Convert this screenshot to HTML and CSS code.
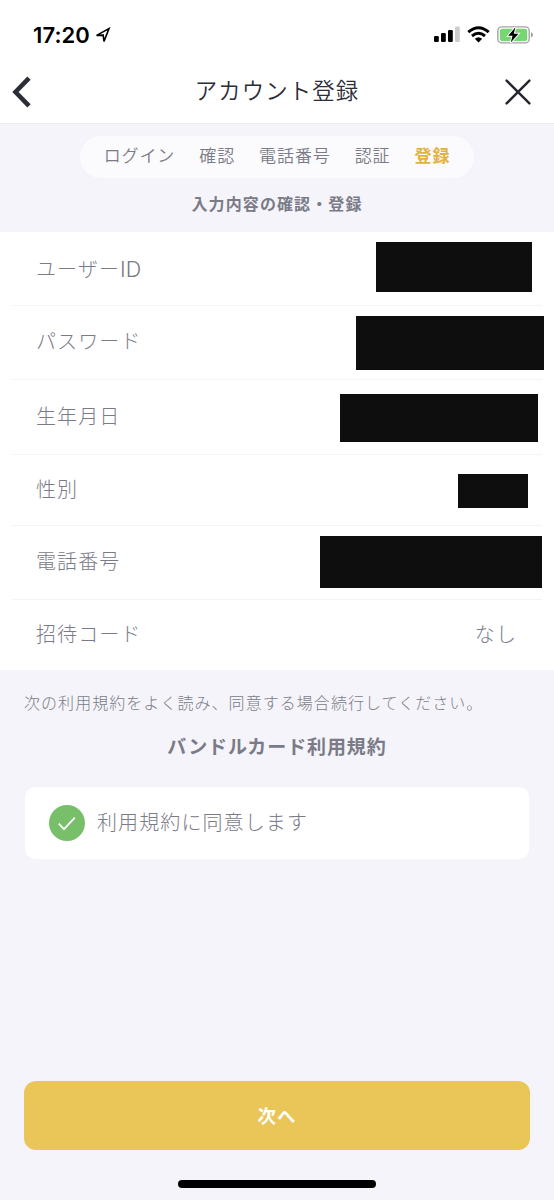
FILE: index.html
```html
<!DOCTYPE html>
<html lang="ja">
<head>
<meta charset="utf-8">
<title>アカウント登録</title>
<link rel="stylesheet" href="styles.css">
</head>
<body>
<div class="screen">
  <div class="statusbar">
    <span class="clock">17:20</span>
    <svg class="location" width="16" height="16" viewBox="0 0 16 16"><path d="M1.6 8.4 14 1.6 9 14.4 8.2 8.4Z" fill="none" stroke="#000" stroke-width="1.6"/><path d="M1 8.4 9 7.2 8.2 9.2Z"/></svg>
    <svg class="signal" width="26" height="16" viewBox="0 0 26 16"><rect y="10" width="4.8" height="6" rx="1.2"/><rect x="7" y="7" width="4.8" height="9" rx="1.2"/><rect x="14" y="4" width="4.8" height="12" rx="1.2"/><rect x="21" y="0.5" width="4.8" height="15.5" rx="1.2" fill="#ccc"/></svg>
    <svg class="wifi" width="23" height="17" viewBox="0 0 23 17"><g fill="none" stroke="#000" stroke-width="3"><path d="M1.3 6.2Q11.5-2.6 21.7 6.2"/><path d="M5 10Q11.5 4.5 18 10"/></g><path d="M7.8 12.8Q11.5 9.8 15.2 12.8L11.5 16.5Z"/></svg>
    <svg class="battery" width="36" height="18" viewBox="0 0 36 18"><rect x=".8" y=".9" width="31.4" height="16" rx="4" fill="#fff" stroke="#a3a3a3" stroke-width="1.4"/><rect x="2.8" y="2.8" width="27.4" height="12.2" rx="2.2" fill="#76d672"/><path d="M34 6.2Q36 7 36 8.8T34 11.6Z" fill="#999"/><path d="M18.4 1.2 11.2 9.8h4.3L13.8 16.6 21.4 7.7h-4.6Z" stroke="#fff" stroke-width="2" paint-order="stroke"/></svg>
  </div>
  <header class="navbar">
    <svg class="back" width="20" height="32" viewBox="0 0 20 32"><path d="M17 2.2 3.5 16 17 29.8" fill="none" stroke="#2b2d37" stroke-width="4.6"/></svg>
    <h1 class="title">アカウント登録</h1>
    <svg class="close" width="26" height="26" viewBox="0 0 26 26"><path d="M1.6 1.6 24.4 24.4M24.4 1.6 1.6 24.4" stroke="#24262f" stroke-width="2.4" stroke-linecap="round"/></svg>
  </header>
  <div class="intro">
    <nav class="steps"><span>ログイン</span><span>確認</span><span>電話番号</span><span>認証</span><span class="current">登録</span></nav>
    <h2 class="subtitle">入力内容の確認・登録</h2>
  </div>
  <div class="list">
    <div class="row user"><span class="label">ユーザー<span class="latin">ID</span></span><span class="mask"></span></div>
    <div class="row password"><span class="label">パスワード</span><span class="mask"></span></div>
    <div class="row birthday"><span class="label">生年月日</span><span class="mask"></span></div>
    <div class="row gender"><span class="label">性別</span><span class="mask"></span></div>
    <div class="row phone"><span class="label">電話番号</span><span class="mask"></span></div>
    <div class="row invite"><span class="label">招待コード</span><span class="value">なし</span></div>
  </div>
  <p class="note">次の利用規約をよく読み、同意する場合続行してください。</p>
  <a class="terms">バンドルカード利用規約</a>
  <div class="agree">
    <svg width="36" height="36" viewBox="0 0 36 36"><circle cx="18" cy="18" r="18" fill="#77c069"/><path d="M9.8 18.7 15 24.2 25.8 12.7" fill="none" stroke="#fff" stroke-width="1.8"/></svg>
    <span>利用規約に同意します</span>
  </div>
  <button class="next">次へ</button>
  <div class="home"></div>
</div>
</body>
</html>
```

FILE: styles.css
```css
* { box-sizing: border-box; }
body { margin: 0; font-family: "Noto Sans CJK JP", sans-serif; font-weight: 300; color: #7a7b87; }
.screen { width: 554px; height: 1200px; background: #f5f4fa; display: flex; flex-direction: column; }
svg { display: block; flex: none; }
.statusbar { height: 62px; background: #fff; display: flex; align-items: flex-start; padding: 26px 21px 0 33px; }
.clock { font: 600 22px/18px Inter, sans-serif; color: #000; width: 62px; letter-spacing: 0.1px; }
.location { margin-top: 1px; }
.signal { margin-left: auto; }
.wifi { margin-left: 7px; }
.battery { margin-left: 7px; }
.navbar { height: 62px; background: #fff; border-bottom: 1px solid #ebebf4; display: flex; align-items: flex-start; justify-content: space-between; padding: 14px 23px 0 12px; }
.title { margin: -1px 0 0; font-size: 22.4px; line-height: 28px; font-weight: 350; letter-spacing: 1.1px; color: #2b2d37; padding-left: 17px; }
.close { margin-top: 3px; }
.intro { height: 108px; padding-top: 12px; display: flex; flex-direction: column; align-items: center; }
.steps { height: 42px; border-radius: 21px; background: #fbfbfd; padding: 0 24px; display: flex; gap: 24px; font-size: 17px; line-height: 38px; letter-spacing: .9px; white-space: nowrap; font-weight: 350; }
.current { color: #e2b23d; font-weight: 700; }
.subtitle { margin: 12px 0 0; font-size: 16px; line-height: 26px; letter-spacing: 1.1px; font-weight: 700; }
.list { background: #fff; height: 438px; padding: 0 12px; }
.row { display: flex; justify-content: space-between; align-items: flex-start; height: 74px; padding-left: 24px; border-bottom: 1px solid #f3f3f9; }
.label, .value { font-size: 20px; line-height: 70px; letter-spacing: 1.1px; white-space: nowrap; }
.user .label { line-height: 73px; }
.latin { font-family: Inter, sans-serif; font-weight: 300; font-size: 21.5px; line-height: 1; letter-spacing: 0; }
.mask { background: #0e0e0e; flex: none; }
.user .mask { width: 156px; height: 50px; margin: 10px 10px 0 0; }
.password .mask { width: 188px; height: 54px; margin: 10px -2px 0 0; }
.birthday { height: 75px; }
.birthday .mask { width: 198px; height: 48px; margin: 14px 4px 0 0; }
.birthday .label { line-height: 71px; }
.gender { height: 71px; }
.gender .label { line-height: 68px; }
.gender .mask { width: 70px; height: 34px; margin: 19px 14px 0 0; }
.phone .mask { width: 222px; height: 52px; margin: 10px 0 0; }
.invite { height: 70px; border-bottom: 0; }
.invite .label, .invite .value { line-height: 68px; }
.value { margin-right: 25px; }
.note { margin: 19px 0 0 24px; font-size: 16px; line-height: 26px; letter-spacing: 1.05px; white-space: nowrap; }
.terms { align-self: center; margin-top: 17px; font-size: 19px; line-height: 28px; letter-spacing: .9px; font-weight: 700; }
.agree { margin: 27px 25px 0; height: 72px; border-radius: 10px; background: #fff; display: flex; align-items: center; padding-left: 24px; gap: 12px; font-size: 20px; letter-spacing: 1.1px; }
.agree span { line-height: 70px; padding-bottom: 2px; }
.next { margin: 222px 24px 0; height: 69px; border: 0; border-radius: 12px; background: #eac558; color: #fff; font: 700 18.5px/26px "Noto Sans CJK JP", sans-serif; letter-spacing: 1px; padding: 0 0 2px; }
.home { align-self: center; width: 198px; height: 8px; border-radius: 4px; background: #000; margin-top: 30px; }
```
